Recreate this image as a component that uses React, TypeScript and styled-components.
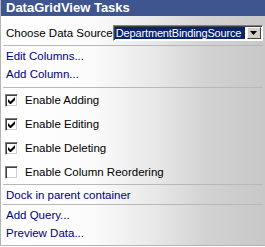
import styled, { createGlobalStyle } from 'styled-components';

const GlobalStyle = createGlobalStyle`
  html, body {
    margin: 0;
    padding: 0;
    background: #ffffff;
  }
  body {
    font-family: 'Liberation Sans', Arial, sans-serif;
    font-size: 11.5px;
  }
`;

const Panel = styled.div`
  width: 265px;
  height: 246px;
  box-sizing: border-box;
  border-left: 1px solid #b4b4b4;
  border-bottom: 1px solid #b4b4b4;
  background: linear-gradient(to right, #ffffff 0%, #fbfbfb 35%, #e8e8e8 58%, #d2d2d2 78%, #c8c8c8 100%);
  display: flex;
  flex-direction: column;
  overflow: hidden;
`;

const Header = styled.div`
  height: 16px;
  margin-left: -1px;
  padding-left: 6px;
  background: #3f5590;
  color: #ffffff;
  font-weight: bold;
  font-size: 13px;
  line-height: 16px;
  white-space: nowrap;
`;

const Section = styled.div<{ $top?: number; $bottom?: number }>`
  padding-top: ${(p) => p.$top ?? 0}px;
  padding-bottom: ${(p) => p.$bottom ?? 0}px;
  display: flex;
  flex-direction: column;
`;

const Separator = styled.div`
  height: 1px;
  margin: 0 2px 0 2px;
  background: #b8b8b8;
`;

const SourceRow = styled.div`
  display: flex;
  align-items: center;
  justify-content: space-between;
  padding: 9px 3px 4px 5px;
  color: #000000;
  white-space: nowrap;
`;

const Combo = styled.div`
  flex: 0 0 150px;
  width: 150px;
  height: 16px;
  box-sizing: border-box;
  display: flex;
  align-items: stretch;
  background: #ffffff;
  border-top: 1px solid #808080;
  border-left: 1px solid #808080;
  border-right: 1px solid #ffffff;
  border-bottom: 1px solid #ffffff;
  box-shadow: inset 1px 1px 0 #404040;
  padding: 1px;
`;

const ComboText = styled.div`
  flex: 1;
  background: #0a246a;
  color: #ffffff;
  font-size: 11px;
  line-height: 12px;
  padding-left: 1px;
  letter-spacing: -0.15px;
  white-space: nowrap;
  overflow: hidden;
`;

const ComboButton = styled.div`
  flex: 0 0 14px;
  margin-left: 2px;
  box-sizing: border-box;
  background: #d4d0c8;
  border-top: 1px solid #ffffff;
  border-left: 1px solid #ffffff;
  border-right: 1px solid #404040;
  border-bottom: 1px solid #404040;
  display: flex;
  align-items: center;
  justify-content: center;
`;

const LinkRow = styled.div`
  height: 18px;
  line-height: 18px;
  padding-left: 5px;
  color: #000080;
  white-space: nowrap;
`;

const CheckRow = styled.div`
  height: 24px;
  display: flex;
  align-items: center;
  padding-left: 4px;
  gap: 7px;
  color: #000000;
  white-space: nowrap;
`;

const Box = styled.div`
  width: 13px;
  height: 13px;
  box-sizing: border-box;
  background: #ffffff;
  border-top: 1px solid #808080;
  border-left: 1px solid #808080;
  border-right: 1px solid #ffffff;
  border-bottom: 1px solid #ffffff;
  box-shadow: inset 1px 1px 0 #404040, inset -1px -1px 0 #d4d0c8;
  display: flex;
  align-items: center;
  justify-content: center;
`;

const CheckBox = ({ checked }: { checked: boolean }) => (
  <Box>
    {checked && (
      <svg width="7" height="7" viewBox="0 0 7 7">
        <path d="M0 2v3l2 2h1l4-4V0L2.5 4.5z" fill="#000" />
      </svg>
    )}
  </Box>
);

const options = [
  { label: 'Enable Adding', checked: true },
  { label: 'Enable Editing', checked: true },
  { label: 'Enable Deleting', checked: true },
  { label: 'Enable Column Reordering', checked: false },
];

export default function App() {
  return (
    <>
      <GlobalStyle />
      <Panel>
        <Header>DataGridView Tasks</Header>
        <SourceRow>
          <span>Choose Data Source</span>
          <Combo>
            <ComboText>DepartmentBindingSource</ComboText>
            <ComboButton>
              <svg width="7" height="4" viewBox="0 0 7 4">
                <path d="M0 0h7L3.5 4z" fill="#000" />
              </svg>
            </ComboButton>
          </Combo>
        </SourceRow>
        <Separator />
        <Section $top={1} $bottom={4}>
          <LinkRow>Edit Columns...</LinkRow>
          <LinkRow>Add Column...</LinkRow>
        </Section>
        <Separator />
        <Section>
          {options.map((o) => (
            <CheckRow key={o.label}>
              <CheckBox checked={o.checked} />
              <span>{o.label}</span>
            </CheckRow>
          ))}
        </Section>
        <Separator />
        <Section $top={1}>
          <LinkRow>Dock in parent container</LinkRow>
        </Section>
        <Separator />
        <Section $top={1}>
          <LinkRow>Add Query...</LinkRow>
          <LinkRow>Preview Data...</LinkRow>
        </Section>
      </Panel>
    </>
  );
}
